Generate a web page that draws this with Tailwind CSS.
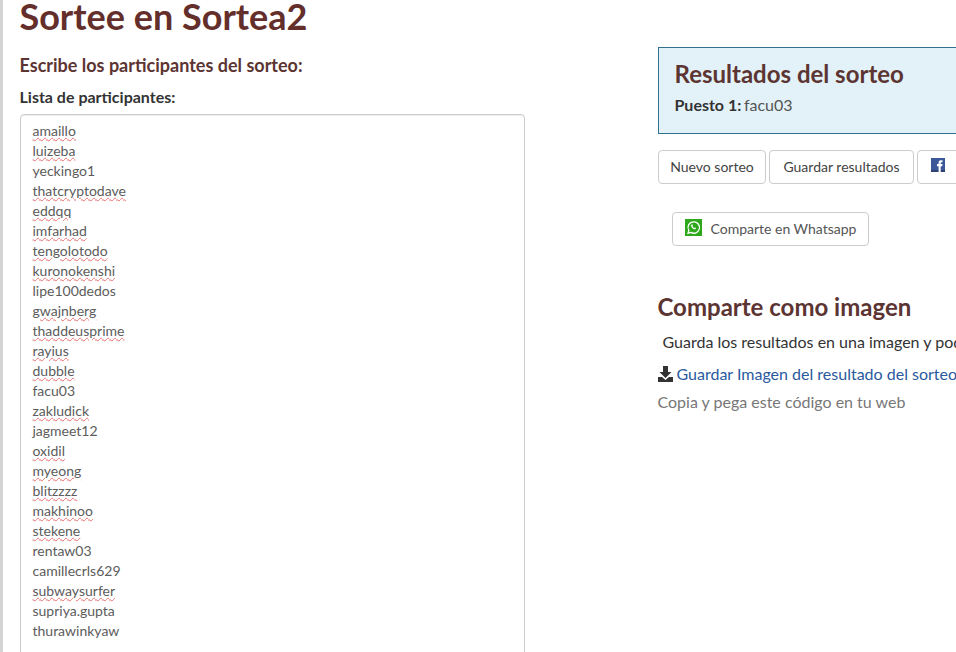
<!DOCTYPE html>
<html lang="es">
<head>
<meta charset="utf-8">
<title>Sortea2</title>
<script src="https://cdn.jsdelivr.net/npm/@tailwindcss/browser@4"></script>
</head>
<body class="bg-white">
<div class="h-[652px] w-[956px] overflow-hidden flex border-l-[3px] border-[#d4d4d4] font-['Lato','Noto_Sans',sans-serif] text-[#333]">
  <main class="w-[655px] shrink-0 pl-[17px]">
    <h1 class="text-[36px] leading-[32px] font-bold text-[#642f2b] -ml-[0.5px]">Sortee en Sortea2</h1>
    <h2 class="mt-[23px] text-[18px] leading-[20px] font-bold text-[#5c3533] -ml-[0.5px]">Escribe los participantes del sorteo:</h2>
    <label class="block mt-[12px] text-[16px] leading-[20px] font-bold -ml-[0.5px]">Lista de participantes:</label>
    <div class="mt-[7px] w-[505px] h-[600px] border border-[#ccc] rounded-[4px] pl-[11.5px] pr-[12px] py-[6px] text-[14px] leading-[20px] text-[#5c5c5c] shadow-[inset_0_1px_1px_rgba(0,0,0,0.075)]">
      <div class="underline decoration-wavy decoration-[#e87070] decoration-1 underline-offset-1">amaillo</div>
      <div class="underline decoration-wavy decoration-[#e87070] decoration-1 underline-offset-1">luizeba</div>
      <div>yeckingo1</div>
      <div class="underline decoration-wavy decoration-[#e87070] decoration-1 underline-offset-1">thatcryptodave</div>
      <div class="underline decoration-wavy decoration-[#e87070] decoration-1 underline-offset-1">eddqq</div>
      <div class="underline decoration-wavy decoration-[#e87070] decoration-1 underline-offset-1">imfarhad</div>
      <div class="underline decoration-wavy decoration-[#e87070] decoration-1 underline-offset-1">tengolotodo</div>
      <div class="underline decoration-wavy decoration-[#e87070] decoration-1 underline-offset-1">kuronokenshi</div>
      <div>lipe100dedos</div>
      <div class="underline decoration-wavy decoration-[#e87070] decoration-1 underline-offset-1">gwajnberg</div>
      <div class="underline decoration-wavy decoration-[#e87070] decoration-1 underline-offset-1">thaddeusprime</div>
      <div class="underline decoration-wavy decoration-[#e87070] decoration-1 underline-offset-1">rayius</div>
      <div class="underline decoration-wavy decoration-[#e87070] decoration-1 underline-offset-1">dubble</div>
      <div>facu03</div>
      <div class="underline decoration-wavy decoration-[#e87070] decoration-1 underline-offset-1">zakludick</div>
      <div>jagmeet12</div>
      <div class="underline decoration-wavy decoration-[#e87070] decoration-1 underline-offset-1">oxidil</div>
      <div class="underline decoration-wavy decoration-[#e87070] decoration-1 underline-offset-1">myeong</div>
      <div class="underline decoration-wavy decoration-[#e87070] decoration-1 underline-offset-1">blitzzzz</div>
      <div class="underline decoration-wavy decoration-[#e87070] decoration-1 underline-offset-1">makhinoo</div>
      <div class="underline decoration-wavy decoration-[#e87070] decoration-1 underline-offset-1">stekene</div>
      <div>rentaw03</div>
      <div>camillecrls629</div>
      <div class="underline decoration-wavy decoration-[#e87070] decoration-1 underline-offset-1">subwaysurfer</div>
      <div>supriya.gupta</div>
      <div>thurawinkyaw</div>
    </div>
  </main>
  <aside class="w-[420px] shrink-0 pt-[47px] whitespace-nowrap">
    <section class="h-[87px] border border-[#31708f] bg-[#e3f2f8] pl-[15.5px] pt-[12px]">
      <h2 class="text-[24px] leading-[28px] font-bold text-[#5c3533]">Resultados del sorteo</h2>
      <p class="mt-[7px] text-[16px] leading-[20px]"><b>Puesto 1:</b> <span class="text-[#555] -ml-[1.5px]">facu03</span></p>
    </section>
    <div class="mt-[16px] flex gap-[3px] text-[14px] leading-[20px] text-[#444]">
      <button class="h-[34px] w-[108px] border border-[#ccc] rounded-[4px] bg-white">Nuevo sorteo</button>
      <button class="h-[34px] w-[145px] border border-[#ccc] rounded-[4px] bg-white">Guardar resultados</button>
      <button aria-label="Compartir en Facebook" class="h-[34px] w-[70px] shrink-0 pl-[13px] border border-[#ccc] rounded-[4px] bg-white flex items-start pt-[7px]">
        <svg width="14" height="14" viewBox="0 0 14 14" class="shrink-0"><rect width="14" height="14" fill="#3b5998"/><rect y="12" width="14" height="2" fill="#2d4373"/><path d="M7.6 14V8.200H6V6h1.600V4.600C7.600 3 8.600 2.200 10 2.200h1.500v2.100h-1c-.6 0-.8.3-.8.8V6h1.800l-.3 2.200H9.700V14z" fill="#fff"/></svg>
      </button>
    </div>
    <div class="mt-[28px] ml-[14px]">
      <button class="h-[34px] w-[197px] pl-[12px] border border-[#ccc] rounded-[4px] bg-white flex items-start gap-[8.5px] text-[14px] leading-[32px] text-[#555]">
        <svg width="17" height="17" viewBox="0 0 17 17" class="shrink-0 mt-[6px]"><rect width="17" height="17" fill="#2ca81a"/><path d="M8.700 2.800a5.700 5.700 0 0 0-4.900 8.600L3 14.200l2.900-.8a5.700 5.700 0 1 0 2.800-10.600z" fill="none" stroke="#fff" stroke-width="1.300"/><path d="M6.700 5.600c-.9.700-.7 1.900.3 3.100 1.100 1.300 2.500 2 3.400 1.500.5-.3.800-.8.700-1.100l-1.300-.7-.6.600c-.6-.2-1.300-.9-1.700-1.700l.5-.6-.6-1.300c-.2-.1-.5 0-.7.200z" fill="#fff"/></svg>
        <span>Comparte en Whatsapp</span>
      </button>
    </div>
    <h2 class="mt-[47px] text-[24px] leading-[28px] font-bold text-[#5c3533] -ml-[0.5px]">Comparte como imagen</h2>
    <p class="mt-[11px] pl-[4.5px] text-[16px] leading-[20px]">Guarda los resultados en una imagen y podrás compartirlos</p>
    <a class="mt-[12px] flex items-center gap-[3.5px] text-[16px] leading-[20px] text-[#2a5a9e]">
      <svg width="15" height="16" viewBox="0 0 15 16" class="shrink-0"><path d="M5 0h5v6h3.500L7.500 12 1.500 6H5z" fill="#333"/><path d="M0 11h4l3.500 3 3.500-3h4v5H0z" fill="#333"/></svg>
      <span>Guardar Imagen del resultado del sorteo</span>
    </a>
    <p class="mt-[8px] -ml-[0.5px] text-[16px] leading-[20px] text-[#777]">Copia y pega este código en tu web</p>
  </aside>
</div>
</body>
</html>
